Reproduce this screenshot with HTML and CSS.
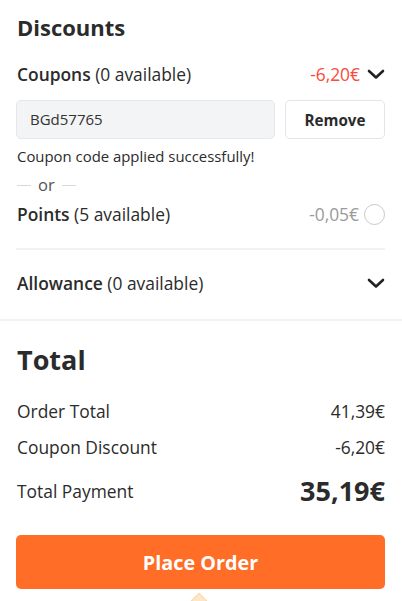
FILE: index.html
```html
<!DOCTYPE html>
<html lang="en">
<head>
<meta charset="utf-8">
<link rel="stylesheet" href="styles.css">
</head>
<body>
<div class="page">
  <section class="discounts">
    <h2 class="title">Discounts</h2>
    <div class="row coupons-row">
      <div class="label"><strong>Coupons</strong> (0 available)</div>
      <div class="right">
        <span class="amount red">-6,20€</span>
        <svg class="chev" width="18" height="12" viewBox="0 0 18 12"><path d="M2 3 L9 9.5 L16 3" fill="none" stroke="#222" stroke-width="2.6" stroke-linecap="round" stroke-linejoin="round"/></svg>
      </div>
    </div>
    <div class="coupon-form">
      <div class="input">BGd57765</div>
      <button class="remove">Remove</button>
    </div>
    <p class="success">Coupon code applied successfully!</p>
    <div class="or"><span class="line"></span><span class="or-text">or</span><span class="line"></span></div>
    <div class="row points-row">
      <div class="label"><strong>Points</strong> (5 available)</div>
      <div class="right">
        <span class="amount gray">-0,05€</span>
        <span class="radio"></span>
      </div>
    </div>
    <div class="divider"></div>
    <div class="row allowance-row">
      <div class="label"><strong>Allowance</strong> (0 available)</div>
      <div class="right">
        <svg class="chev" width="18" height="12" viewBox="0 0 18 12"><path d="M2 3 L9 9.5 L16 3" fill="none" stroke="#222" stroke-width="2.6" stroke-linecap="round" stroke-linejoin="round"/></svg>
      </div>
    </div>
  </section>
  <div class="section-sep"></div>
  <section class="total">
    <h2 class="title big">Total</h2>
    <div class="trow first"><span>Order Total</span><span>41,39€</span></div>
    <div class="trow"><span>Coupon Discount</span><span>-6,20€</span></div>
    <div class="trow pay"><span>Total Payment</span><span class="grand">35,19€</span></div>
    <div class="btn-wrap">
      <button class="place">Place Order</button>
      <span class="tip-arrow"></span>
    </div>
  </section>
</div>
</body>
</html>
```
FILE: styles.css
```css
* { box-sizing: border-box; }
html, body { margin: 0; padding: 0; background: #fff; }
body {
  font-family: "Open Sans", "Noto Sans", sans-serif;
  color: #2b2b2b;
  width: 402px;
  height: 601px;
  overflow: hidden;
}
.page { position: relative; }
.discounts { padding: 12px 17px 0 16px; }
.title {
  margin: 0;
  font-size: 22px;
  line-height: 30px;
  font-weight: 700;
  color: #2b2b2b;
  padding-left: 1px;
}
.title.big { font-size: 27px; line-height: 34px; }
.row {
  display: flex;
  align-items: center;
  justify-content: space-between;
  height: 24px;
  font-size: 17.4px;
  line-height: 24px;
  padding-left: 1px;
}
.row strong { font-weight: 600; }
.coupons-row { margin-top: 20px; }
.right { display: flex; align-items: center; gap: 6px; }
.amount.red { color: #fa4b3c; }
.amount.gray { color: #9a9a9a; }
.chev { display: block; margin-left: 1px; }
.coupon-form {
  display: flex;
  gap: 10px;
  margin-top: 14px;
  height: 39px;
}
.input {
  flex: 1;
  background: #f3f4f6;
  border: 1px solid #e6e7ea;
  border-radius: 5px;
  padding: 0 13px;
  font-size: 15px;
  line-height: 37px;
  color: #333;
}
.remove {
  width: 100px;
  background: #fff;
  border: 1px solid #e4e5e8;
  border-radius: 5px;
  font-family: inherit;
  font-size: 15.2px;
  font-weight: 700;
  color: #2b2b2b;
  padding: 0;
}
.success {
  margin: 8px 0 0 1px;
  font-size: 14.9px;
  line-height: 18px;
  color: #2b2b2b;
}
.or {
  display: flex;
  align-items: center;
  gap: 7px;
  margin-top: 10px;
  height: 20px;
  padding-left: 1px;
}
.or .line { width: 14px; height: 1px; background: #d9d9d9; }
.or-text { font-size: 16.5px; line-height: 20px; color: #555; }
.points-row { margin-top: 7px; }
.radio {
  width: 21px;
  height: 21px;
  border: 1px solid #c9c9c9;
  border-radius: 50%;
  margin-left: -1px;
}
.divider { height: 2px; background: #f2f2f2; margin-top: 22px; }
.allowance-row { margin-top: 21px; }
.section-sep { height: 2px; background: #f2f2f2; margin-top: 24px; }
.total { padding: 22px 17px 0 16px; }
.trow {
  display: flex;
  justify-content: space-between;
  align-items: center;
  font-size: 17.4px;
  line-height: 24px;
  margin-top: 12px;
  padding-left: 1px;
}
.trow.first { margin-top: 22px; }
.trow.pay { margin-top: 14px; height: 36px; }
.grand { font-size: 27px; font-weight: 700; line-height: 36px; }
.btn-wrap { position: relative; margin-top: 26px; }
.place {
  display: block;
  width: 100%;
  height: 54px;
  background: #ff6d27;
  color: #fff;
  border: none;
  border-radius: 5px;
  font-family: inherit;
  font-size: 19.8px;
  font-weight: 700;
}
.tip-arrow {
  position: absolute;
  left: 175px;
  top: 61px;
  width: 16px;
  height: 16px;
  background: #fde7c9;
  border: 1px solid #fbd6a4;
  transform: rotate(45deg);
}
```
